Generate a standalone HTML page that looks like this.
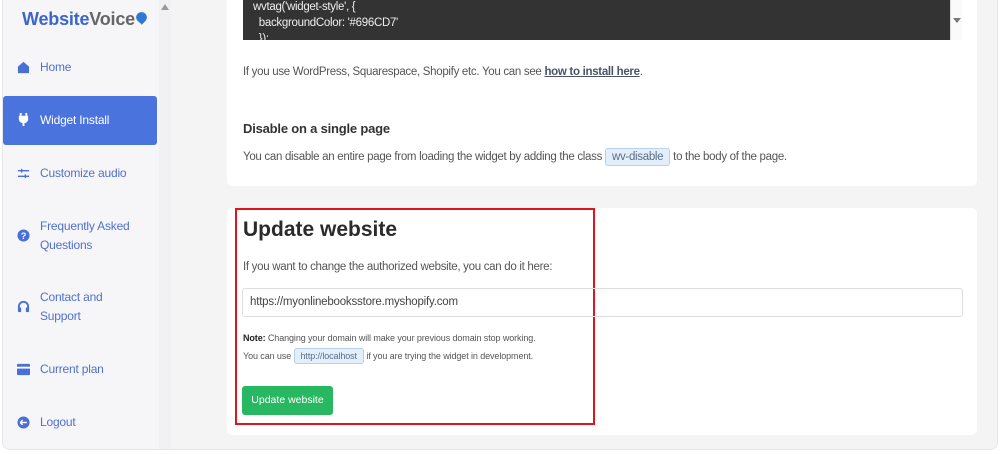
<!DOCTYPE html>
<html><head><style>
*{margin:0;padding:0;box-sizing:border-box}
body{width:1000px;height:454px;background:#fff;font-family:"Liberation Sans",sans-serif;position:relative;overflow:hidden;color:#555}
.wrap{position:absolute;left:2px;top:-10px;width:996px;height:460px;border:1px solid #e6e6ea;border-radius:8px;background:#f4f4f6;overflow:hidden}
.side{position:absolute;left:0;top:0;width:156px;height:100%;background:#f6f6f8}
.sb{position:absolute;left:156px;top:0;width:12px;height:100%;background:#f1f1f3}
.main{position:absolute;left:168px;top:0;right:0;height:100%;background:#f4f4f5}
.logo{position:absolute;left:22px;top:9px;font-weight:bold;font-size:18px;color:#3c66c8;letter-spacing:-0.2px}
.logo span{color:#666}
.item{position:absolute;left:0;width:154px;font-size:12px;color:#5070cc;line-height:19px;letter-spacing:-0.2px}
.item .ic{position:absolute;left:17px;width:13px;height:13px}
.item .t{position:absolute;left:40px}
.active{background:#4b73dd;color:#fff;border-radius:3px;height:49px;left:3px;width:154px}
.active .ic{left:14px}.active .t{left:37px}
.card{position:absolute;background:#fff;border-radius:5px;left:227px;width:750px}
p{font-size:11.5px;color:#555;letter-spacing:-0.3px}
</style></head><body>
<div class="wrap">
<div class="side"></div>
<div class="sb"><div style="position:absolute;left:2px;top:13px;width:0;height:0;border-left:4px solid transparent;border-right:4px solid transparent;border-bottom:6px solid #999"></div></div>
<div class="main"></div>
</div>
<div class="logo">Website<span>Voice</span><svg width="13" height="15" viewBox="0 0 12 14" style="vertical-align:-1px"><path d="M6 1a5 5 0 0 1 5 5c0 3-3 5-5 7 0-2-5-3-5-7a5 5 0 0 1 5-5z" fill="#2f78d8"/></svg></div>

<div class="item" style="top:58px;height:19px"><svg class="ic" style="top:3px" viewBox="0 0 14 14"><path d="M1 6L7 1l6 5v7H1z" fill="#4a6fd6"/></svg><span class="t">Home</span></div>
<div class="item active" style="top:96px"><svg class="ic" style="top:17px" viewBox="0 0 14 14"><path d="M4 0v3M10 0v3" stroke="#fff" stroke-width="2"/><path d="M2 3h10v4a5 5 0 0 1-4 4v3H6v-3a5 5 0 0 1-4-4z" fill="#fff"/></svg><span class="t" style="top:15px">Widget Install</span></div>
<div class="item" style="top:164px"><svg class="ic" style="top:3px" viewBox="0 0 14 14"><path d="M1 4h12M1 10h12" stroke="#4a6fd6" stroke-width="1.5"/><path d="M5 2v4M9 8v4" stroke="#4a6fd6" stroke-width="1.5"/></svg><span class="t">Customize audio</span></div>
<div class="item" style="top:217px"><svg class="ic" style="top:12px" viewBox="0 0 14 14"><circle cx="7" cy="7" r="6.5" fill="#4a6fd6"/><text x="7" y="11" font-size="10" font-weight="bold" fill="#fff" text-anchor="middle" font-family="Liberation Sans">?</text></svg><span class="t">Frequently Asked<br>Questions</span></div>
<div class="item" style="top:288px"><svg class="ic" style="top:12px" viewBox="0 0 14 14"><path d="M2 9V7a5 5 0 0 1 10 0v2" stroke="#4a6fd6" stroke-width="2" fill="none"/><rect x="1" y="8" width="3.5" height="5" rx="1" fill="#4a6fd6"/><rect x="9.5" y="8" width="3.5" height="5" rx="1" fill="#4a6fd6"/></svg><span class="t">Contact and<br>Support</span></div>
<div class="item" style="top:360px"><svg class="ic" style="top:3px" viewBox="0 0 14 14"><rect x="0" y="1" width="14" height="12" rx="1" fill="#4a6fd6"/><rect x="0" y="4" width="14" height="2" fill="#fff"/></svg><span class="t">Current plan</span></div>
<div class="item" style="top:413px"><svg class="ic" style="top:3px" viewBox="0 0 14 14"><circle cx="7" cy="7" r="6.5" fill="#4a6fd6"/><path d="M3.5 7h7M3.5 7l2.5-2.5M3.5 7l2.5 2.5" stroke="#fff" stroke-width="1.6" fill="none"/></svg><span class="t">Logout</span></div>

<div class="card" style="top:-10px;height:196px"></div>
<div style="position:absolute;left:243px;top:-1px;width:707px;height:41px;background:#333;color:#eee;font-size:11.5px;line-height:16px;padding-left:10px;overflow:hidden;letter-spacing:-0.3px">wvtag('widget-style', {<br>&nbsp;&nbsp;backgroundColor: '#696CD7'<br>&nbsp;&nbsp;});</div>
<div style="position:absolute;left:950px;top:0;width:12px;height:40px;background:#fafafa;border-left:1px solid #ddd"><div style="position:absolute;left:2px;top:18px;border-left:4px solid transparent;border-right:4px solid transparent;border-top:5px solid #777"></div></div>
<p style="position:absolute;left:243px;top:66px">If you use WordPress, Squarespace, Shopify etc. You can see <b style="color:#4a5468;text-decoration:underline">how to install here</b>.</p>
<div style="position:absolute;left:243px;top:121px;font-size:13px;font-weight:bold;color:#333;letter-spacing:-0.2px">Disable on a single page</div>
<p style="position:absolute;left:243px;top:151px">You can disable an entire page from loading the widget by adding the class <span style="background:#e2eefa;border:1px solid #b8d2ee;border-radius:3px;padding:2px 6px;color:#5a6f8a">wv-disable</span> to the body of the page.</p>

<div class="card" style="top:208px;height:227px"></div>
<div style="position:absolute;left:235px;top:208px;width:360px;height:217px;border:2px solid #e0141c"></div>
<div style="position:absolute;left:243px;top:218px;font-size:21px;font-weight:bold;color:#2b2b2b">Update website</div>
<p style="position:absolute;left:243px;top:261px">If you want to change the authorized website, you can do it here:</p>
<div style="position:absolute;left:242px;top:288px;width:721px;height:29px;border:1px solid #ddd;border-radius:3px;font-size:11.5px;color:#444;padding:7px 0 0 7px;letter-spacing:-0.2px">https://myonlinebooksstore.myshopify.com</div>
<div style="position:absolute;left:243px;top:333px;font-size:9px;color:#555;letter-spacing:-0.1px"><b style="color:#222">Note:</b> Changing your domain will make your previous domain stop working.</div>
<div style="position:absolute;left:243px;top:351px;font-size:9px;color:#555;letter-spacing:-0.1px">You can use <span style="background:#e2eefa;border:1px solid #b8d2ee;border-radius:3px;padding:2px 6px;color:#5a6f8a">http://localhost</span> if you are trying the widget in development.</div>
<div style="position:absolute;left:242px;top:386px;width:91px;height:29px;background:#28b862;border-radius:3px;color:#fff;font-size:10.5px;text-align:center;line-height:29px">Update website</div>
</body></html>
